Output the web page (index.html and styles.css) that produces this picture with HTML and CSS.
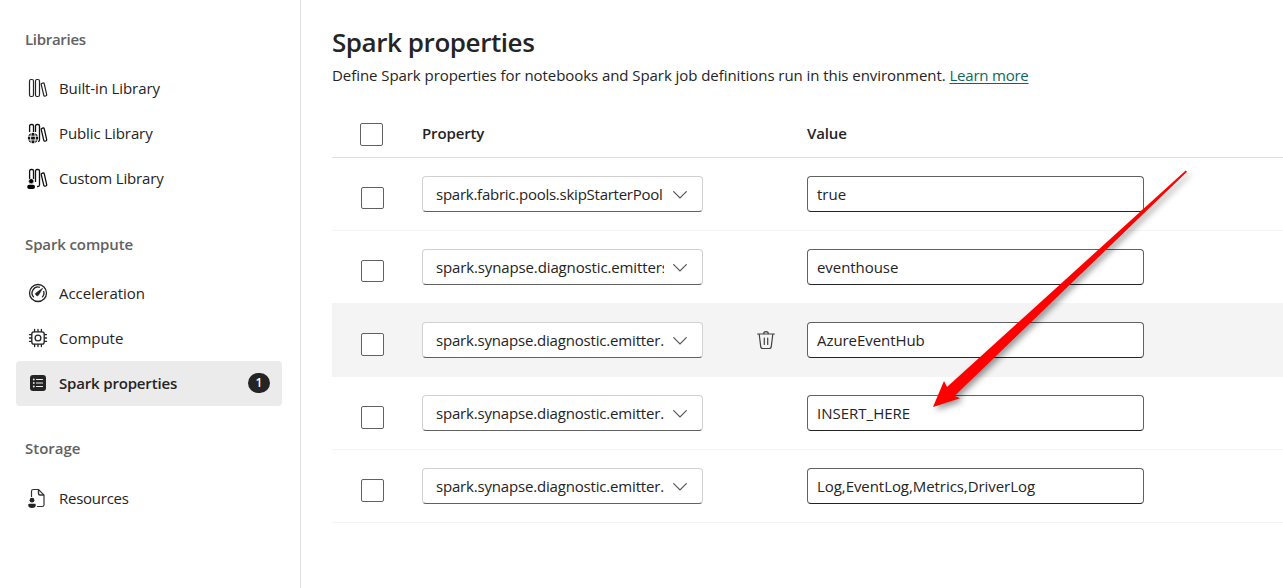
FILE: index.html
```html
<!DOCTYPE html>
<html lang="en">
<head>
<meta charset="utf-8">
<title>Spark properties</title>
<link rel="stylesheet" href="styles.css">
</head>
<body>
<svg class="defs" aria-hidden="true">
  <symbol id="chevron" viewBox="0 0 14 8"><path d="M.7.7 7 7 13.300.7" fill="none" stroke="#555" stroke-width="1.2" stroke-linecap="round"/></symbol>
</svg>
<div class="app">
  <nav class="sidebar">
    <h2 class="group first">Libraries</h2>
    <a class="item"><svg class="icon" viewBox="0 0 22 22" fill="none" stroke="#242424" stroke-width="1.200"><rect x="2.500" y="2.500" width="4" height="17" rx="1.500"/><rect x="8.500" y="2.500" width="4" height="17" rx="1.500"/><path d="M14.200 7.400q-.2-.9.700-1.100l1.200-.3q.9-.2 1.100.7l2.500 10.900q.2.900-.7 1.200l-1.100.3q-.9.200-1.100-.7z"/></svg><span class="label">Built-in Library</span></a>
    <a class="item"><svg class="icon" viewBox="0 0 22 22" fill="none" stroke="#111" stroke-width="1.300"><path d="M2.600 10V4q0-1.500 1.500-1.500h1Q6.500 2.500 6.500 4v6M8.500 10V4q0-1.500 1.500-1.500h1q1.500 0 1.500 1.500v14q0 1.500-1.500 1.500"/><path d="M14.200 7.400q-.2-.9.700-1.100l1.200-.3q.9-.2 1.100.7l2.500 10.900q.2.900-.7 1.200l-1.100.3q-.9.200-1.100-.7z"/><circle cx="6" cy="16" r="5.200" fill="#111" stroke="none"/><path stroke="#fff" stroke-width=".9" d="M1 14.200h10M1 18h10M4.300 11q-1.500 5 0 10M7.700 11q1.500 5 0 10"/></svg><span class="label">Public Library</span></a>
    <a class="item"><svg class="icon" viewBox="0 0 22 22" fill="none" stroke="#111" stroke-width="1.300"><path d="M2.600 12V4q0-1.500 1.500-1.500h1Q6.500 2.500 6.500 4v8M8.500 15V4q0-1.500 1.500-1.500h1q1.500 0 1.500 1.500v14q0 1.500-1.500 1.500h-1"/><path d="M14.200 7.400q-.2-.9.700-1.100l1.200-.3q.9-.2 1.100.7l2.500 10.900q.2.900-.7 1.200l-1.100.3q-.9.200-1.100-.7z"/><circle cx="4.200" cy="14.200" r="2.500" fill="#000" stroke="#fff" stroke-width=".5"/><rect x=".2" y="17.700" width="7.800" height="4.300" rx="2.100" fill="#000" stroke="none"/></svg><span class="label custom">Custom Library</span></a>

    <h2 class="group compute">Spark compute</h2>
    <a class="item"><svg class="icon" viewBox="0 0 22 22" fill="none" stroke="#242424" stroke-width="1.300"><circle cx="11" cy="11" r="8.500"/><path d="M6.800 15.200a6 6 0 0 1 6.100-9.900M16.600 9a6 6 0 0 1-1.400 6.200"/><path d="m15.800 6.100-6.300 4.400a1.700 1.700 0 1 0 2.300 2.300z" fill="#242424" stroke-width=".5"/></svg><span class="label plain">Acceleration</span></a>
    <a class="item"><svg class="icon" viewBox="0 0 22 22" fill="none" stroke="#242424" stroke-width="1.300" stroke-linecap="round"><rect x="4.800" y="4.800" width="12.400" height="12.400" rx="2.200"/><circle cx="11" cy="11" r="2.900"/><path d="M7.600 2.500v2M11 2.500v2M14.400 2.500v2M7.600 17.500v2M11 17.500v2M14.400 17.500v2M2.500 7.600h2M2.500 11h2M2.500 14.400h2M17.500 7.600h2M17.500 11h2M17.500 14.400h2"/></svg><span class="label plain">Compute</span></a>
    <a class="item selected"><svg class="icon" viewBox="0 0 22 22"><rect x="3" y="3" width="16" height="16" rx="3" fill="#242424"/><path d="M9.500 7.500h6M9.500 11h6M9.500 14.500h6" stroke="#eee" stroke-width="1.200" stroke-linecap="round"/><g fill="#eee"><circle cx="6.800" cy="7.500" r=".9"/><circle cx="6.800" cy="11" r=".9"/><circle cx="6.800" cy="14.500" r=".9"/></g></svg><span class="label">Spark properties</span><span class="badge">1</span></a>

    <h2 class="group last">Storage</h2>
    <a class="item"><svg class="icon" viewBox="0 0 22 22" fill="none" stroke="#333" stroke-width="1.200"><path d="M4.500 10V4.300Q4.500 2.500 6.300 2.500h5.200l5.500 5.500v9.700q0 1.800-1.800 1.800H10"/><path d="M11.500 2.500v4q0 1.500 1.500 1.500h4" stroke-width="1.400"/><circle cx="5" cy="13.200" r="2.400" fill="#242424" stroke="none"/><path d="M1.200 18.100q0-1.300 1.300-1.300h5q1.300 0 1.300 1.300 0 2.900-3.800 2.900t-3.800-2.900z" fill="#242424" stroke="none"/></svg><span class="label resources">Resources</span></a>
  </nav>

  <main class="content">
    <h1 class="title">Spark properties</h1>
    <p class="intro">Define Spark properties for notebooks and Spark job definitions run in this environment. <a class="link">Learn more</a></p>

    <div class="table">
      <div class="row head">
        <div class="check"><span class="box"></span></div>
        <div class="cell">Property</div>
        <div class="cell">Value</div>
      </div>
      <div class="row">
        <div class="check"><span class="box"></span></div>
        <div class="cell"><div class="select"><span class="option pools">spark.fabric.pools.skipStarterPool</span><svg class="chevron"><use href="#chevron"/></svg></div></div>
        <div class="cell"><div class="input">true</div></div>
      </div>
      <div class="row">
        <div class="check"><span class="box"></span></div>
        <div class="cell"><div class="select"><span class="option emitters">spark.synapse.diagnostic.emitters</span><svg class="chevron"><use href="#chevron"/></svg></div></div>
        <div class="cell"><div class="input tight">eventhouse</div></div>
      </div>
      <div class="row hover">
        <div class="check"><span class="box tall"></span></div>
        <div class="cell"><div class="select"><span class="option">spark.synapse.diagnostic.emitter.</span><svg class="chevron"><use href="#chevron"/></svg></div>
          <svg class="trash" viewBox="0 0 20 20" fill="none" stroke="#424242" stroke-width="1.200" stroke-linecap="round"><path d="M1.600 4h16.800M3.200 4.200l1.500 12.200q.2 2.100 2.200 2.100h6.200q2 0 2.200-2.100L16.800 4.200M7.600 4q0-2.400 2.400-2.400T12.400 4M8.300 8v6.500M11.700 8v6.500"/></svg></div>
        <div class="cell"><div class="input tight">AzureEventHub</div></div>
      </div>
      <div class="row">
        <div class="check"><span class="box tall"></span></div>
        <div class="cell"><div class="select"><span class="option">spark.synapse.diagnostic.emitter.</span><svg class="chevron"><use href="#chevron"/></svg></div></div>
        <div class="cell"><div class="input">INSERT_HERE</div></div>
      </div>
      <div class="row">
        <div class="check"><span class="box tall"></span></div>
        <div class="cell"><div class="select"><span class="option">spark.synapse.diagnostic.emitter.</span><svg class="chevron"><use href="#chevron"/></svg></div></div>
        <div class="cell"><div class="input tight">Log,EventLog,Metrics,DriverLog</div></div>
      </div>
    </div>
  </main>
  <svg class="arrow" viewBox="920 160 280 260"><path d="M1187 171.700 954.500 396 960 398.300 933 407 944 381 947 387 1185.700 170.500z" fill="red"/></svg>
</div>
</body>
</html>
```
FILE: styles.css
```css
* { box-sizing: border-box; }
body { margin: 0; background: #fff; color: #242424; font: 15px/22px "Open Sans", "Noto Sans", sans-serif; overflow: hidden; }
h1, h2, p { margin: 0; }
.defs { position: absolute; width: 0; height: 0; }
.app { position: relative; display: flex; width: 1283px; height: 588px; overflow: hidden; }
.sidebar { width: 301px; flex: none; padding: 0 18px 0 16px; border-right: 1px solid #e0e0e0; }
.group { height: 70px; padding: 32px 9px 0; font-size: 15px; line-height: 22px; font-weight: 600; color: #616161; letter-spacing: -.12px; white-space: nowrap; }
.group.first { height: 66px; padding-top: 28px; letter-spacing: -.3px; }
.group.last { padding-top: 31px; letter-spacing: 0; }
.item { display: flex; align-items: center; height: 45px; padding: 0 12px 2px 11px; border-radius: 4px; }
.item.selected { background: #ebebeb; font-weight: 600; }
.icon { width: 22px; height: 22px; flex: none; margin-right: 10px; }
.label { flex: 1; letter-spacing: -.1px; white-space: nowrap; }
.label.custom { letter-spacing: -.17px; }
.label.plain { letter-spacing: -.03px; }
.label.resources { letter-spacing: -.25px; }
.selected .label { letter-spacing: -.17px; }
.badge { width: 22px; height: 20px; border-radius: 10px; background: #242424; color: #fff; font-size: 12px; line-height: 20px; text-align: center; }
.content { flex: 1; min-width: 0; padding-left: 31px; }
.title { height: 64px; padding-top: 25px; font-size: 26px; line-height: 34px; font-weight: 600; letter-spacing: -.43px; white-space: nowrap; }
.intro { height: 47px; letter-spacing: -.06px; white-space: nowrap; }
.link { color: #0c695a; letter-spacing: -.22px; text-decoration: underline; text-underline-offset: 2px; }
.row { display: grid; grid-template-columns: 90px 385px 1fr; height: 73px; padding-top: 18px; border-bottom: 1px solid #f4f4f4; }
.row.head { height: 47px; padding-top: 11px; border-bottom-color: #e0e0e0; font-weight: 600; letter-spacing: -.13px; }
.row.hover { background: #f4f4f4; }
.check { padding: 11px 0 0 29px; }
.head .check { padding: 1px 0 0 28px; }
.box { display: block; width: 23px; height: 22px; border: 1px solid #616161; border-radius: 2px; background: #fff; }
.head .box, .box.tall { height: 23px; }
.cell { display: flex; align-items: flex-start; min-width: 0; white-space: nowrap; }
.select { display: flex; align-items: center; width: 281px; height: 36px; padding: 0 15px 0 13px; border: 1px solid #d1d1d1; border-bottom-color: #616161; border-radius: 4px; background: #fff; }
.option { width: 228px; overflow: hidden; letter-spacing: -.18px; }
.option.pools { width: 229px; margin-right: -1px; letter-spacing: -.25px; }
.option.emitters { letter-spacing: -.13px; }
.chevron { width: 14px; height: 8px; margin: 1px 0 0 9px; }
.trash { width: 20px; height: 20px; margin: 8px 0 0 53px; }
.input { display: flex; align-items: center; width: 337px; height: 36px; padding: 0 9px; border: 1px solid #616161; border-bottom-color: #242424; border-radius: 4px; background: #fff; }
.input.tight { letter-spacing: -.06px; }
.arrow { position: absolute; left: 920px; top: 160px; width: 280px; height: 260px; filter: drop-shadow(3px 3px 3px rgba(0, 0, 0, .42)); }
```
